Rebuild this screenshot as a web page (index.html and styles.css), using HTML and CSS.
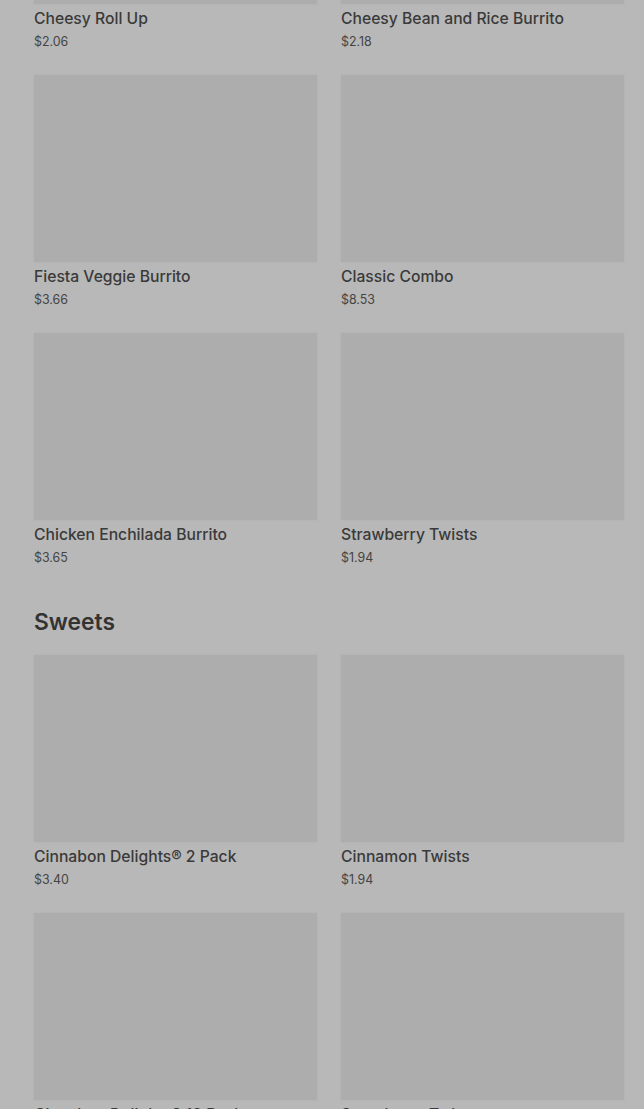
FILE: index.html
```html
<!DOCTYPE html>
<html lang="en">
<head>
  <meta charset="UTF-8">
  <title>Menu</title>
  <link rel="stylesheet" href="styles.css">
</head>
<body>
  <div class="menu">
    <div class="grid first">
      <div class="item">
        <div class="pic"></div>
        <div class="name">Cheesy Roll Up</div>
        <div class="price">$2.06</div>
      </div>
      <div class="item">
        <div class="pic"></div>
        <div class="name">Cheesy Bean and Rice Burrito</div>
        <div class="price">$2.18</div>
      </div>
      <div class="item">
        <div class="pic"></div>
        <div class="name">Fiesta Veggie Burrito</div>
        <div class="price">$3.66</div>
      </div>
      <div class="item">
        <div class="pic"></div>
        <div class="name">Classic Combo</div>
        <div class="price">$8.53</div>
      </div>
      <div class="item">
        <div class="pic"></div>
        <div class="name">Chicken Enchilada Burrito</div>
        <div class="price">$3.65</div>
      </div>
      <div class="item">
        <div class="pic"></div>
        <div class="name">Strawberry Twists</div>
        <div class="price">$1.94</div>
      </div>
    </div>

    <h2 class="section">Sweets</h2>
    <div class="grid">
      <div class="item">
        <div class="pic"></div>
        <div class="name">Cinnabon Delights&reg; 2 Pack</div>
        <div class="price">$3.40</div>
      </div>
      <div class="item">
        <div class="pic"></div>
        <div class="name">Cinnamon Twists</div>
        <div class="price">$1.94</div>
      </div>
      <div class="item">
        <div class="pic"></div>
        <div class="name">Cinnabon Delights&reg; 12 Pack</div>
        <div class="price">$13.99</div>
      </div>
      <div class="item">
        <div class="pic"></div>
        <div class="name">Strawberry Twists</div>
        <div class="price">$1.94</div>
      </div>
    </div>
  </div>
</body>
</html>
```

FILE: styles.css
```css
html, body {
  margin: 0;
  background: #b8b8b8;
  overflow: hidden;
}

body {
  font-family: Inter, Roboto, "Liberation Sans", sans-serif;
  color: #333;
}

.menu {
  padding: 0 20px 0 34px;
}

.grid {
  display: grid;
  grid-template-columns: 283px 283px;
  column-gap: 24px;
  row-gap: 24px;
}

.grid.first {
  margin-top: -183px;
}

.pic {
  height: 187px;
  background: #adadad;
  box-shadow: 0 0 2px rgba(0, 0, 0, 0.06);
}

.name {
  margin-top: 5px;
  font-size: 15.7px;
  line-height: 20px;
  font-weight: 500;
  color: #3a3a3a;
}

.price {
  margin-top: 4px;
  font-size: 12.4px;
  line-height: 18px;
  color: #444;
}

.section {
  margin: 40px 0 18px;
  font-size: 22.8px;
  line-height: 30px;
  font-weight: 600;
  color: #333;
}
```
